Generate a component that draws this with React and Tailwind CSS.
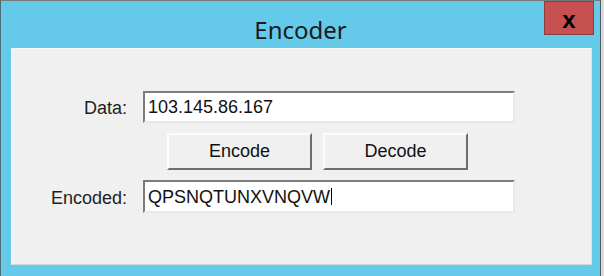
import React from "react";

const font = { fontFamily: '"Liberation Sans", Arial, sans-serif' };

function Field({ children }) {
  return (
    <div className="flex h-full w-[372px] items-center border-2 border-t-[#7c7c7c] border-l-[#7c7c7c] border-b-[#e8e8e8] border-r-[#e8e8e8] bg-white pl-[3px] text-[18px] leading-[28px] text-[#111]">
      {children}
    </div>
  );
}

function Btn({ children }) {
  return (
    <div className="flex h-[37px] w-[145px] items-center justify-center border-2 border-t-[#fbfbfb] border-l-[#fbfbfb] border-b-[#6e6e6e] border-r-[#6e6e6e] bg-[#f0f0f0] text-[18px] text-[#111]">
      {children}
    </div>
  );
}

export default function App() {
  return (
    <div className="h-[276px] w-[604px] overflow-hidden bg-[#dcdcdc]" style={font}>
      <div className="relative flex h-[290px] w-[601px] flex-col border-l border-t border-r border-l-[#4f6b78] border-t-[#7a7a7a] border-r-[#4f5a60] bg-[#65c9ea]">
        <div
          className="h-[47px] pt-[17px] text-center text-[24px] leading-[24px] text-[#1a1a1a]"
          style={{ fontFamily: '"Noto Sans", "Open Sans", sans-serif' }}
        >
          Encoder
        </div>
        <div className="absolute left-[543px] top-0 flex h-[34px] w-[50px] items-center justify-center border border-[#8e3d3d] bg-[#c75050] pt-[3px] text-[24px] font-black leading-none text-black">
          x
        </div>
        <div className="ml-[10px] h-[217px] w-[581px] border border-t-[#f8f8f8] border-l-[#f8f8f8] border-b-[#d6d6d6] border-r-[#e2e2e2] bg-[#f0f0f0] pt-[42px] text-[#1e1e1e]">
          <div className="flex h-[32px] items-center">
            <div className="mt-[3px] w-[115px] text-right text-[18px]">Data:</div>
            <div className="ml-[16px] h-[32px]">
              <Field>103.145.86.167</Field>
            </div>
          </div>
          <div className="mt-[10px] flex gap-[11px] pl-[155px]">
            <Btn>Encode</Btn>
            <Btn>Decode</Btn>
          </div>
          <div className="mt-[10px] flex h-[33px] items-center">
            <div className="mt-[3px] w-[115px] text-right text-[18px]">Encoded:</div>
            <div className="ml-[16px] h-[33px]">
              <Field>
                <span>QPSNQTUNXVNQVW</span>
                <span className="ml-px inline-block h-[17px] w-px bg-black" />
              </Field>
            </div>
          </div>
        </div>
      </div>
    </div>
  );
}
